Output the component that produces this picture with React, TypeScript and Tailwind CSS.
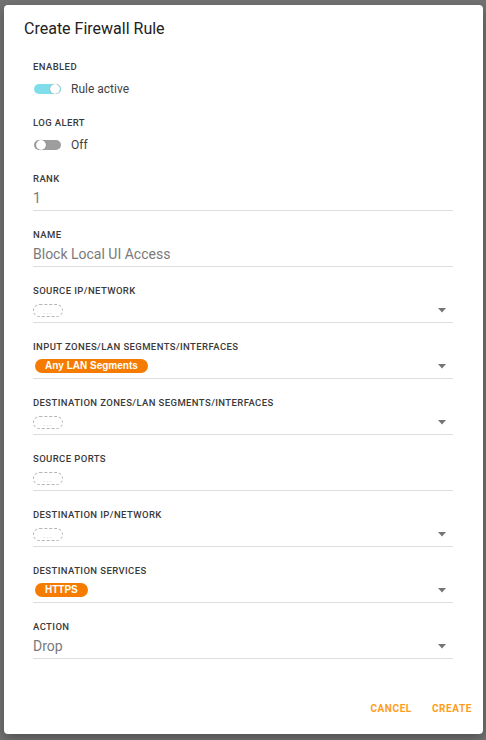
import React from "react";

const font = { fontFamily: "Roboto, 'Liberation Sans', sans-serif" };

const Label = ({ children }: { children: React.ReactNode }) => (
  <div className="h-[12px] text-[9.5px] leading-[12px] font-medium tracking-[0.4px] text-[#3a3a3a] uppercase">
    {children}
  </div>
);

const Toggle = ({ on }: { on: boolean }) => (
  <div className="relative w-[28px] h-[12px] flex items-center">
    <div className={`w-[27px] h-[10px] rounded-full ${on ? "bg-[#80deea]" : "bg-[#9e9e9e]"}`} />
    <div
      className={`absolute top-[1px] w-[10px] h-[10px] rounded-full bg-white shadow-[0_0_1px_rgba(0,0,0,0.5)] ${
        on ? "left-[16px]" : "left-[2px]"
      }`}
    />
  </div>
);

const Caret = () => (
  <svg width="8" height="5" viewBox="0 0 8 5" className="shrink-0">
    <path d="M0 0h8L4 4.5z" fill="#757575" />
  </svg>
);

const Empty = () => (
  <div className="w-[30px] h-[13px] rounded-full border border-dashed border-[#b5b5b5] flex items-end justify-center">
    <span className="text-[8px] leading-[8px] text-[#c2c2c2] tracking-[1px]">...</span>
  </div>
);

const Chip = ({ text }: { text: string }) => (
  <div
    className="h-[14px] px-[10px] rounded-full bg-[#f57c00] text-white text-[10px] leading-[14px] font-bold"
    style={{ fontFamily: "Arial, 'Liberation Sans', sans-serif" }}
  >
    {text}
  </div>
);

const ToggleField = ({ label, on, text }: { label: string; on: boolean; text: string }) => (
  <div className="mb-[12px]">
    <Label>{label}</Label>
    <div className="h-[32px] flex items-center gap-[9px] pl-[1px]">
      <Toggle on={on} />
      <span className="text-[12px] text-[#424242]">{text}</span>
    </div>
  </div>
);

const Field = ({
  label,
  children,
  select,
}: {
  label: string;
  children: React.ReactNode;
  select?: boolean;
}) => (
  <div className="mb-[18px]">
    <Label>{label}</Label>
    <div className="h-[26px] border-b border-[#dddddd] flex items-center justify-between pr-[7px] pt-[1px]">
      <div className="flex items-center">{children}</div>
      {select && <Caret />}
    </div>
  </div>
);

const Value = ({ text }: { text: string }) => (
  <span className="text-[14px] text-[#7a7a7a]">{text}</span>
);

export default function App() {
  return (
    <div className="w-[486px] h-[740px] bg-[#727272] pt-[5px] pl-[4px] overflow-hidden" style={font}>
      <div className="w-[479px] h-[729px] bg-white rounded-[4px] flex flex-col shadow-[0_4px_12px_rgba(0,0,0,0.3)]">
        <div className="pt-[12px] pl-[20px] text-[16px] leading-[24px] font-normal text-[#212121]">
          Create Firewall Rule
        </div>
        <div className="mt-[20px] pl-[29px] pr-[30px]">
          <ToggleField label="Enabled" on text="Rule active" />
          <ToggleField label="Log Alert" on={false} text="Off" />
          <Field label="Rank">
            <Value text="1" />
          </Field>
          <Field label="Name">
            <Value text="Block Local UI Access" />
          </Field>
          <Field label="Source IP/Network" select>
            <Empty />
          </Field>
          <Field label="Input Zones/LAN Segments/Interfaces" select>
            <div className="pl-[2px]">
              <Chip text="Any LAN Segments" />
            </div>
          </Field>
          <Field label="Destination Zones/LAN Segments/Interfaces" select>
            <Empty />
          </Field>
          <Field label="Source Ports">
            <Empty />
          </Field>
          <Field label="Destination IP/Network" select>
            <Empty />
          </Field>
          <Field label="Destination Services" select>
            <div className="pl-[2px]">
              <Chip text="HTTPS" />
            </div>
          </Field>
          <Field label="Action" select>
            <Value text="Drop" />
          </Field>
        </div>
        <div className="mt-auto mb-[18px] flex justify-end gap-[20px] pr-[11px] text-[10px] font-bold tracking-[0.6px] text-[#ff9d1a]">
          <span>CANCEL</span>
          <span>CREATE</span>
        </div>
      </div>
    </div>
  );
}
